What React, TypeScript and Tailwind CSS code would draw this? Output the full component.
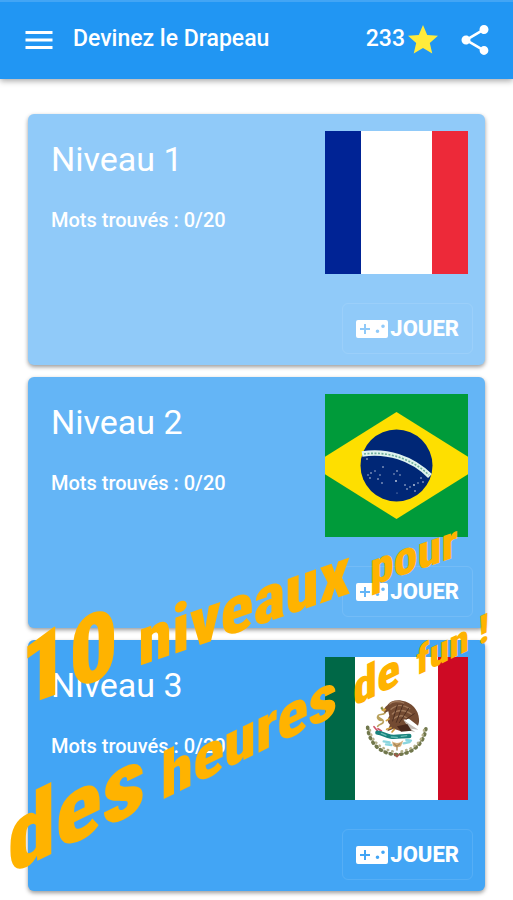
import React from 'react';
import { MdMenu, MdShare, MdStar } from 'react-icons/md';

interface Level {
  id: number;
  found: number;
  total: number;
  color: string;
  flag: React.ReactNode;
}

const FranceFlag: React.FC = () => (
  <svg viewBox="0 0 143 143" className="w-full h-full" role="img" aria-label="France">
    <rect width="143" height="143" fill="#fff" />
    <rect width="36" height="143" fill="#002395" />
    <rect x="107" width="36" height="143" fill="#ed2939" />
  </svg>
);

const BrazilFlag: React.FC = () => (
  <svg viewBox="0 0 143 143" className="w-full h-full" role="img" aria-label="Brésil">
    <rect width="143" height="143" fill="#009b3a" />
    <path d="M71.5 18 157 71.5 71.5 125 -14 71.5Z" fill="#fedf00" />
    <circle cx="71.5" cy="71.500" r="36" fill="#002776" />
    <path d="M37 60C62 56 87 64 105 82" fill="none" stroke="#dff3ee" strokeWidth="5.5" />
    <path d="M39 60C62 57 86 64 104 81" fill="none" stroke="#6fae9c" strokeWidth="1.6" strokeDasharray="2 1.5" />
    <g fill="#fff" opacity="0.8">
      <circle cx="42" cy="65" r="0.8" />
      <circle cx="58" cy="73" r="0.8" />
      <circle cx="43" cy="81" r="0.7" />
      <circle cx="46" cy="79" r="0.8" />
      <circle cx="45" cy="84" r="0.8" />
      <circle cx="50" cy="77" r="0.7" />
      <circle cx="53" cy="85" r="0.8" />
      <circle cx="55" cy="81" r="0.7" />
      <circle cx="57" cy="89" r="0.8" />
      <circle cx="69" cy="80" r="0.7" />
      <circle cx="72" cy="77" r="0.8" />
      <circle cx="75" cy="81" r="0.7" />
      <circle cx="71" cy="87" r="0.9" />
      <circle cx="72" cy="99" r="0.5" />
      <circle cx="80" cy="91" r="0.8" />
      <circle cx="82" cy="95" r="0.8" />
      <circle cx="85" cy="93" r="0.7" />
      <circle cx="89" cy="91" r="0.9" />
      <circle cx="90" cy="97" r="0.8" />
      <circle cx="93" cy="89" r="0.7" />
      <circle cx="96" cy="84" r="0.8" />
      <circle cx="98" cy="88" r="0.8" />
    </g>
  </svg>
);

const MexicoFlag: React.FC = () => (
  <svg viewBox="0 0 143 143" className="w-full h-full" role="img" aria-label="Mexique">
    <rect width="143" height="143" fill="#fff" />
    <rect width="30" height="143" fill="#006847" />
    <rect x="113" width="30" height="143" fill="#ce0a24" />
    <g transform="translate(25 23) scale(0.3333)" fill="none" strokeLinecap="round">
      {/* garland */}
      <path d="M55 143C58 190 92 220 141 223C188 220 220 190 226 146" stroke="#9a9b72" strokeWidth="3" />
      <path d="M53 142C57 190 92 222 141 224C190 221 222 190 228 144" stroke="#71784d" strokeWidth="11" strokeDasharray="3 13" />
      <path d="M60 150C66 188 98 210 138 216M222 150C216 188 190 208 146 216" stroke="#b5b08b" strokeWidth="7" strokeDasharray="2 12" />
      <path d="M134 222l7 8 8-8" stroke="#a8534b" strokeWidth="4" />
      {/* snake */}
      <path d="M97 82c-10 5 14 9 8 17s-20 1-21 9 15 7 16 16-13 8-17 15M84 108c-5 9 6 15 14 12" stroke="#b9a15c" strokeWidth="5" />
      <path d="M94 84l9 9" stroke="#6c8a4c" strokeWidth="4" />
      {/* cactus and lake */}
      <path d="M72 140l10 12M84 146l10 7" stroke="#cc5267" strokeWidth="5" />
      <path d="M82 158c14 0 24 10 40 12s36-2 56-2" stroke="#19827d" strokeWidth="13" />
      <path d="M94 160l14 6M124 171l18 1M154 169l16-2" stroke="#67bdb5" strokeWidth="4" />
      <path d="M101 184l18 3M108 193l16 2M169 180l14 2M161 190l18-4" stroke="#8bd5df" strokeWidth="7" />
      <path d="M126 184c12 8 25 5 34-3l-7 18c-9 5-18 3-24-2z" fill="#d6ae7c" />
      <path d="M132 191l8 8 9-7M141 200v10" stroke="#a98958" strokeWidth="4" />
      {/* eagle */}
      <path d="M112 76c8-13 25-17 44-14 29 4 50 28 51 55 1 9-1 15-3 20l-27-21-17 3 24 22c-9 8-20 12-33 12l-20-7-19 8 8-20c-8-7-9-16-2-26l-3-14-12 5c-3-9 1-18 9-23z" fill="#744b32" />
      <path d="M119 72c7-9 29-9 42-3M123 88c14-13 35-16 56-2M127 102c15-13 35-14 57 0M130 116c13-10 28-12 41-2" stroke="#a0795b" strokeWidth="4" />
      <path d="M142 75l-14 48M159 74l-20 53M177 84l-29 44M193 101l-25 17" stroke="#4d2e20" strokeWidth="3" />
      <path d="M161 121l44 28-22-3 13 11-27-8 5-9z" fill="#c4bcb5" />
      <path d="M141 139l31-7 13 20-32 3z" fill="#4a291c" />
      <path d="M102 84l-8 8 10 3 5-7z" fill="#d2a545" />
      <path d="M123 143l-13 5M133 148l-7 8M117 117l-8 5" stroke="#cc9b3c" strokeWidth="5" />
    </g>
  </svg>
);

const GamepadIcon: React.FC = () => (
  <svg viewBox="0 0 32 18" className="w-8 h-[18px] shrink-0" aria-hidden="true">
    <path
      fillRule="evenodd"
      fill="currentColor"
      d="M2 0h28a2 2 0 0 1 2 2v14a2 2 0 0 1-2 2H2a2 2 0 0 1-2-2V2a2 2 0 0 1 2-2ZM8 4v4H4v2h4v4h2v-4h4V8h-4V4ZM27 4.5a1.8 1.8 0 1 0 0 3.6a1.8 1.8 0 0 0 0-3.6ZM21.500 9.500a1.800 1.800 0 1 0 0 3.600a1.800 1.800 0 0 0 0-3.600Z"
    />
  </svg>
);

const levels: Level[] = [
  { id: 1, found: 0, total: 20, color: 'bg-[#90caf9]', flag: <FranceFlag /> },
  { id: 2, found: 0, total: 20, color: 'bg-[#64b5f6]', flag: <BrazilFlag /> },
  { id: 3, found: 0, total: 20, color: 'bg-[#42a5f5]', flag: <MexicoFlag /> }
];

const LevelCard: React.FC<{ level: Level }> = ({ level }) => (
  <section className={`rounded-md shadow-[0_2px_4px_rgba(0,0,0,0.4)] pt-[17px] pb-[11px] text-white ${level.color}`}>
    <div className="flex items-start justify-between pl-[23px] pr-[17px]">
      <div>
        <h2 className="text-[34px] leading-[56px]">Niveau {level.id}</h2>
        <p className="mt-[17px] text-[20px] leading-8 font-medium">
          Mots trouvés : {level.found}/{level.total}
        </p>
      </div>
      <div className="w-[143px] h-[143px] shrink-0">{level.flag}</div>
    </div>
    <div className="flex justify-end mt-[29px] pr-3">
      <button
        type="button"
        className="flex items-center gap-[2px] h-[51px] px-[13px] rounded-md border border-white/10 text-[22px] font-extrabold"
      >
        <GamepadIcon />
        JOUER
      </button>
    </div>
  </section>
);

const App: React.FC = () => {
  return (
    <div className="relative min-h-screen overflow-hidden bg-white font-['Roboto',sans-serif]">
      <header className="flex items-center h-[79px] pl-[21px] pr-5 pb-[2px] bg-[#2196f3] border-t-2 border-[#42a5f5] text-white shadow-[0_2px_6px_rgba(0,0,0,0.35)]">
        <button type="button" aria-label="Menu">
          <MdMenu className="w-9 h-9" />
        </button>
        <h1 className="ml-4 text-[23px] font-medium">Devinez le Drapeau</h1>
        <div className="flex items-center ml-auto text-[23px] font-medium">
          233
          <MdStar className="w-9 h-9 text-[#ffeb3b]" />
        </div>
        <button type="button" aria-label="Partager" className="ml-4">
          <MdShare className="w-9 h-9" />
        </button>
      </header>

      <main className="flex flex-col gap-3 px-7 pt-[35px] pb-2">
        {levels.map((level) => (
          <LevelCard key={level.id} level={level} />
        ))}
      </main>

      {/* slogan across the level cards */}
      <div className="absolute inset-0 pointer-events-none whitespace-nowrap text-[#ffb300] font-black font-['Roboto_Condensed','Roboto',sans-serif]">
        <p className="absolute left-5 top-[626px] flex items-baseline gap-5 leading-none origin-bottom-left -skew-y-[19deg]">
          <span className="text-[96px]">10</span>
          <span className="text-[68px]">niveaux</span>
          <span className="text-[48px]">pour</span>
        </p>
        <p className="absolute left-2 top-[794px] flex items-baseline gap-4 leading-none origin-bottom-left -skew-y-[26deg]">
          <span className="text-[96px]">des</span>
          <span className="text-[64px]">heures</span>
          <span className="text-[48px]">de</span>
          <span className="text-[40px]">fun !</span>
        </p>
      </div>
    </div>
  );
};

export default App;
